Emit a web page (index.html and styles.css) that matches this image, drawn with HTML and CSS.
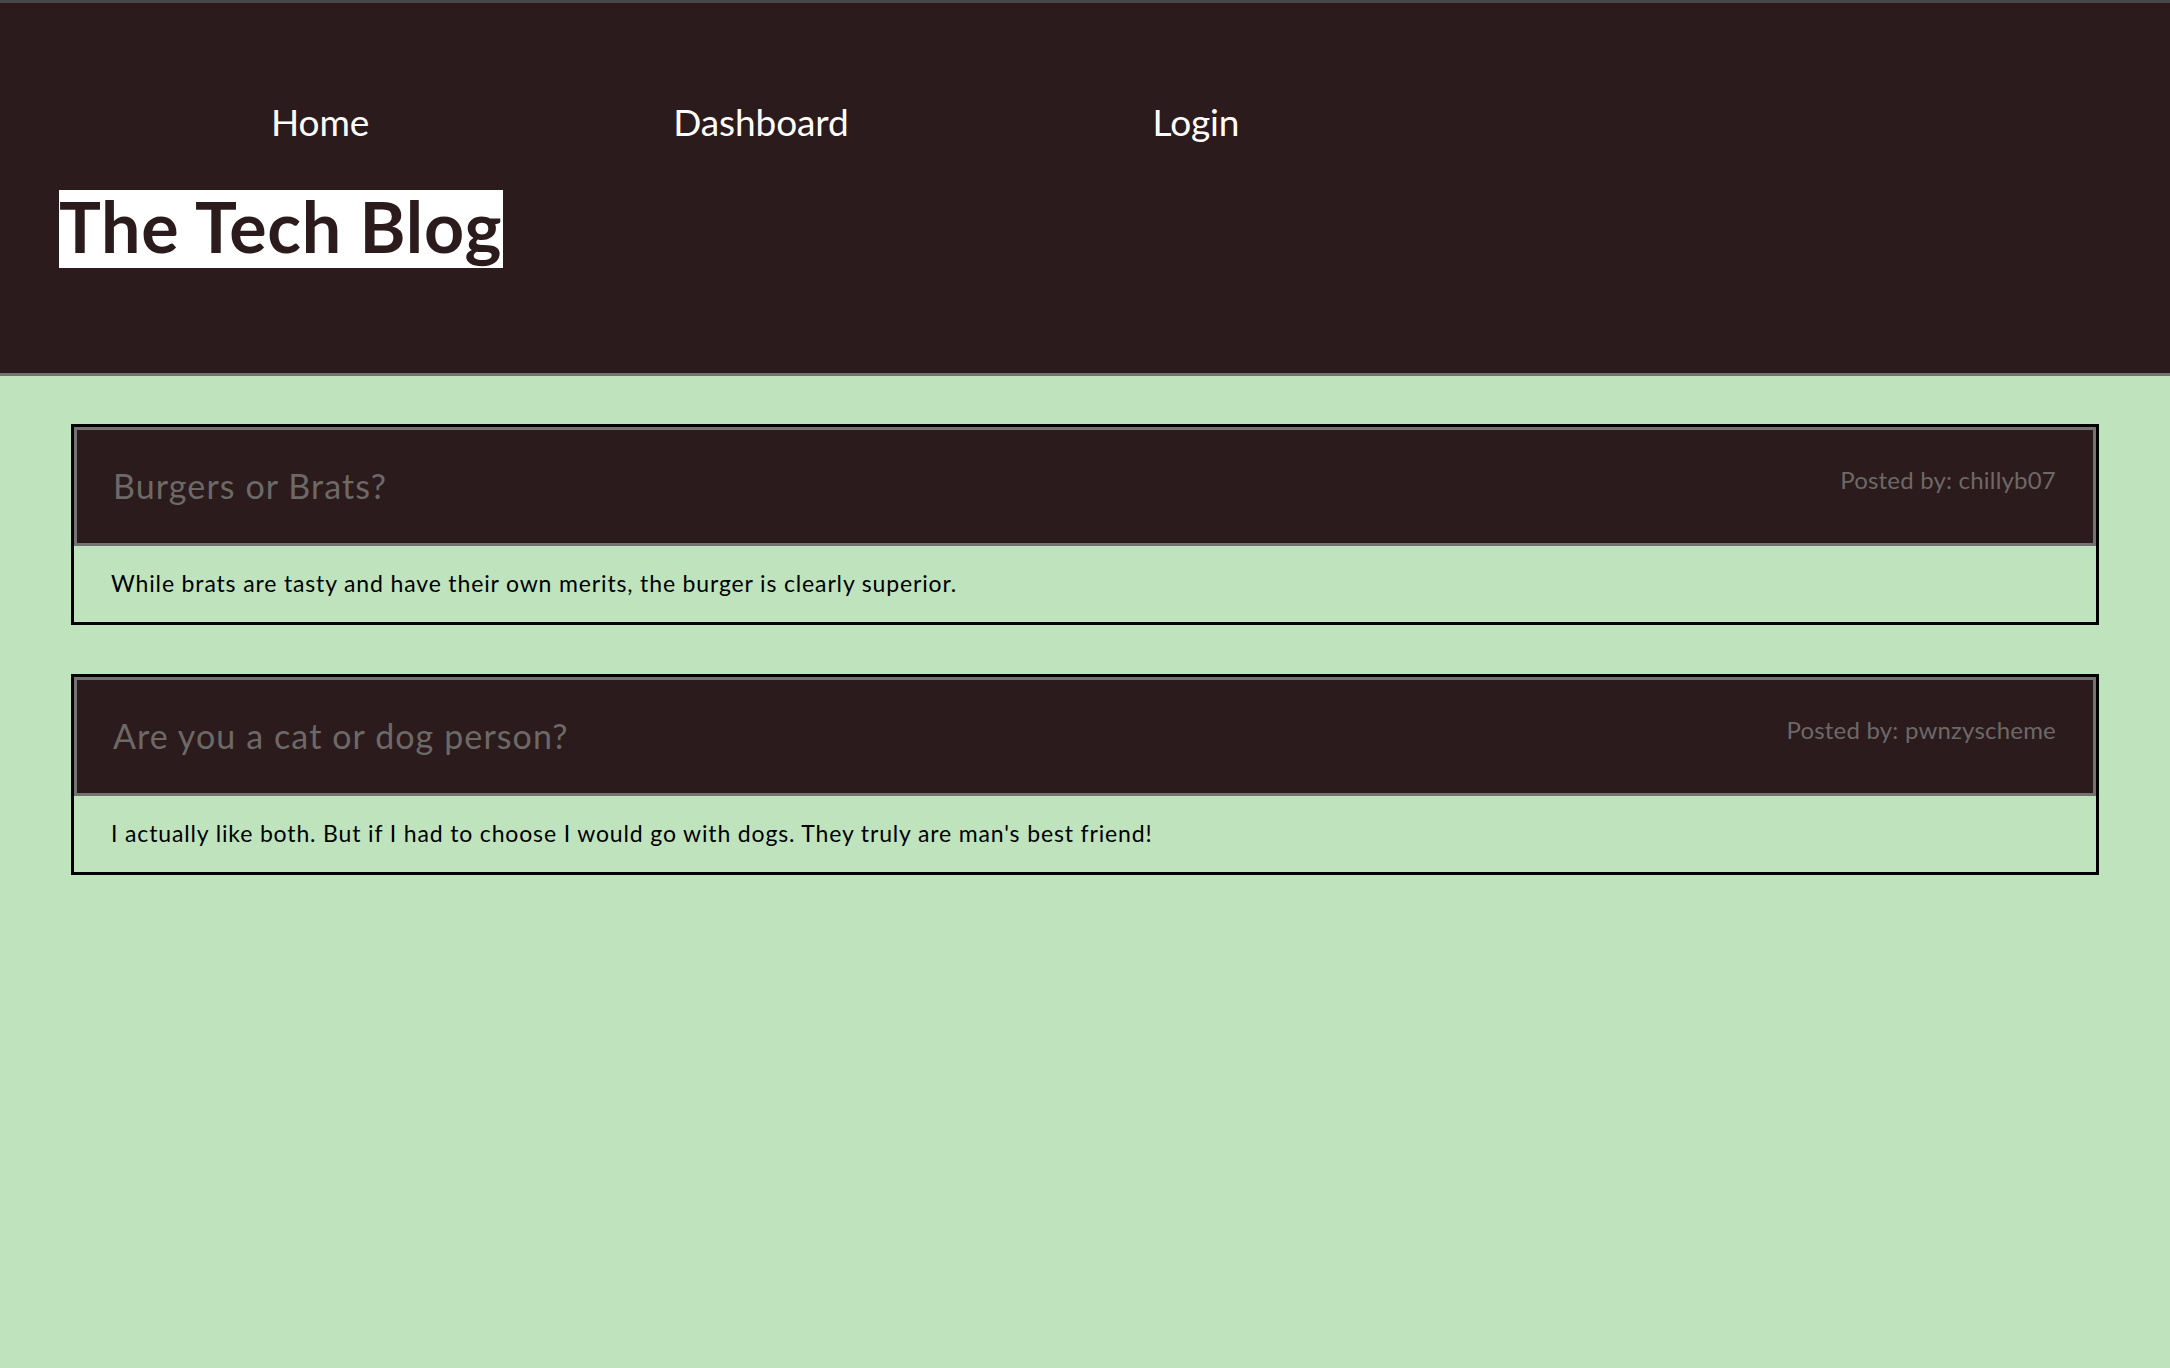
FILE: index.html
```html
<!DOCTYPE html>
<html lang="en">
<head>
<meta charset="utf-8">
<title>The Tech Blog</title>
<link rel="stylesheet" href="styles.css">
</head>
<body>
<header class="site-header">
  <nav class="nav">
    <a class="nav-link" href="#">Home</a>
    <a class="nav-link" href="#">Dashboard</a>
    <a class="nav-link" href="#">Login</a>
  </nav>
  <h1 class="site-title">The Tech Blog</h1>
</header>
<main class="posts">
  <article class="post">
    <div class="post-head">
      <h2 class="post-title">Burgers or Brats?</h2>
      <p class="post-meta">Posted by: chillyb07</p>
    </div>
    <div class="post-body">
      <p class="post-text">While brats are tasty and have their own merits, the burger is clearly superior.</p>
    </div>
  </article>
  <article class="post">
    <div class="post-head">
      <h2 class="post-title">Are you a cat or dog person?</h2>
      <p class="post-meta">Posted by: pwnzyscheme</p>
    </div>
    <div class="post-body">
      <p class="post-text">I actually like both. But if I had to choose I would go with dogs. They truly are man's best friend!</p>
    </div>
  </article>
</main>
</body>
</html>
```

FILE: styles.css
```css
html, body {
  margin: 0;
  padding: 0;
}
body {
  background: #bee3bd;
  font-family: "Trebuchet MS", Lato, "DejaVu Sans", sans-serif;
  line-height: 1.2;
  min-height: 100vh;
}
.site-header {
  background: #2b1b1c;
  border-top: 3px solid #474747;
  border-bottom: 3px solid #737373;
  height: 370px;
  box-sizing: content-box;
  padding: 0;
}
.nav {
  display: flex;
  gap: 304px;
  padding: 97px 0 0 271px;
}
.nav-link {
  color: #ffffff;
  text-decoration: none;
  font-size: 37px;
  letter-spacing: -0.1px;
}
.site-title {
  display: inline-block;
  margin: 46px 0 0 59px;
  background: #ffffff;
  color: #2b1b1c;
  font-size: 70px;
  font-weight: 700;
  line-height: 72px;
  padding: 0 1px 6px 0;
  letter-spacing: 0.7px;
}
.posts {
  display: flex;
  flex-direction: column;
  gap: 49px;
  padding: 48px 71px 0;
}
.post {
  border: 3px solid #000000;
}
.post-head {
  display: flex;
  justify-content: space-between;
  align-items: flex-start;
  background: #2b1b1c;
  border: 3px solid #737373;
  height: 113px;
  box-sizing: content-box;
  padding: 0 37px 0 36px;
}
.post-title {
  margin: 36px 0 0;
  font-size: 34px;
  font-weight: 400;
  color: #6d6967;
  letter-spacing: 1.1px;
}
.post-meta {
  margin: 36px 0 0;
  font-size: 24px;
  color: #6d6967;
  letter-spacing: 0.2px;
}
.post-body {
  height: 76px;
  box-sizing: border-box;
  padding: 24px 36px 0 37px;
}
.post-text {
  margin: 0;
  font-size: 23px;
  color: #000000;
  letter-spacing: 0.85px;
}
```
